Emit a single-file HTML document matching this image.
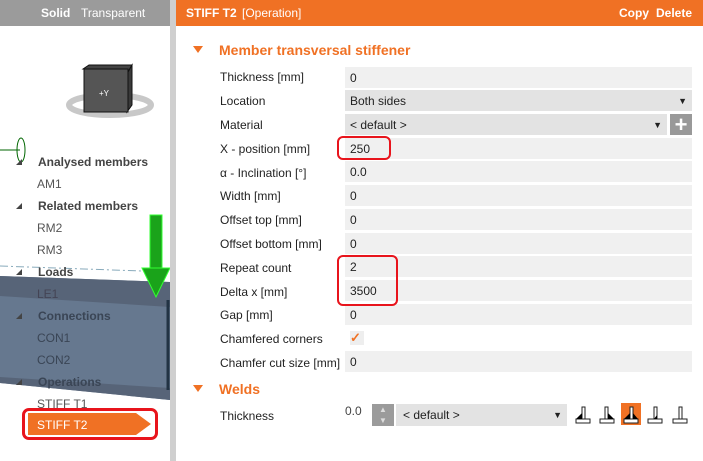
<!DOCTYPE html>
<html><head><meta charset="utf-8"><style>
*{margin:0;padding:0;box-sizing:border-box}
body{width:703px;height:461px;overflow:hidden;background:#fff;font-family:"Liberation Sans",sans-serif;font-size:12px;color:#222;position:relative}
.a{position:absolute}
.lbl{position:absolute;left:220px;font-size:12px;color:#222}
.fld{position:absolute;left:345px;width:347px;height:21px;background:#f0f0f0;padding-left:5px;line-height:22px;font-size:12px}
.dd{background:#e3e3e3}
.arr{position:absolute;right:5px;top:0;font-size:9px}
.tree{position:absolute;font-size:12px;color:#555}
.tb{font-weight:bold;color:#444}
.tri{position:absolute;left:16px;width:0;height:0;border-left:6px solid transparent;border-bottom:6px solid #444}
</style></head><body>
<!-- left panel -->
<div class="a" style="left:0;top:0;width:170px;height:26px;background:#9b9b9b"></div>
<div class="a" style="left:41px;top:6px;color:#fff;font-weight:bold">Solid</div>
<div class="a" style="left:81px;top:6px;color:#fff">Transparent</div>
<div class="a" style="left:170px;top:0;width:6px;height:461px;background:#cfcfcf"></div>
<svg class="a" style="left:0;top:0" width="170" height="461">
<ellipse cx="110" cy="105" rx="41" ry="10" fill="none" stroke="#c8c8c8" stroke-width="6"/>
<polygon points="83,69 89,65 132,65 128,72" fill="#444" stroke="#111"/>
<polygon points="128,72 132,65 132,105 127,112" fill="#3a3a3a" stroke="#111"/>
<rect x="84" y="69" width="44" height="43" fill="#555" stroke="#111"/>
<text x="99" y="96" font-size="8" fill="#fff" font-family="Liberation Sans">+Y</text>
<line x1="0" y1="150" x2="20" y2="150" stroke="#060"/>
<ellipse cx="21" cy="150" rx="4" ry="12" fill="none" stroke="#060"/>
<polygon points="0,276 170,282 170,400 0,383" fill="#66788f"/>
<polygon points="0,276 170,282 170,307 0,296" fill="#576478"/>
<polygon points="0,377 170,388 170,400 0,383" fill="#576478"/>
<line x1="0" y1="266" x2="170" y2="272" stroke="#8ab" stroke-dasharray="8 3 2 3"/>
<rect x="150" y="215" width="12" height="55" fill="#1aa31a" stroke="#3f3"/>
<polygon points="142,268 170,268 156,297" fill="#1aa31a" stroke="#3f3"/>
<line x1="168" y1="300" x2="168" y2="390" stroke="#234" stroke-width="3"/>
</svg>
<div class="tri" style="top:159px"></div>
<div class="tree tb" style="left:38px;top:155px">Analysed members</div>
<div class="tree" style="left:37px;top:177px">AM1</div>
<div class="tri" style="top:203px"></div>
<div class="tree tb" style="left:38px;top:199px">Related members</div>
<div class="tree" style="left:37px;top:221px">RM2</div>
<div class="tree" style="left:37px;top:243px">RM3</div>
<div class="tri" style="top:269px"></div>
<div class="tree tb" style="left:38px;top:265px">Loads</div>
<div class="tree" style="left:37px;top:287px;color:#445">LE1</div>
<div class="tri" style="top:313px"></div>
<div class="tree tb" style="left:38px;top:309px;color:#3a4555">Connections</div>
<div class="tree" style="left:37px;top:331px;color:#3a4555">CON1</div>
<div class="tree" style="left:37px;top:353px;color:#3a4555">CON2</div>
<div class="tri" style="top:379px"></div>
<div class="tree tb" style="left:38px;top:375px;color:#3a4555">Operations</div>
<div class="tree" style="left:37px;top:397px">STIFF T1</div>
<svg class="a" style="left:28px;top:413px" width="124" height="22"><polygon points="0,0 108,0 123,11 108,22 0,22" fill="#f07124"/></svg>
<div class="a" style="left:37px;top:418px;color:#fff">STIFF T2</div>
<div class="a" style="left:22px;top:408px;width:136px;height:32px;border:3px solid #e8141c;border-radius:7px"></div>
<!-- right header -->
<div class="a" style="left:176px;top:0;width:527px;height:26px;background:#f07124"></div>
<div class="a" style="left:186px;top:6px;color:#fff;font-weight:bold">STIFF T2</div>
<div class="a" style="left:242px;top:6px;color:#fff">[Operation]</div>
<div class="a" style="left:619px;top:6px;color:#fff;font-weight:bold">Copy</div>
<div class="a" style="left:656px;top:6px;color:#fff;font-weight:bold">Delete</div>
<div class="a" style="left:193px;top:46px;width:0;height:0;border-left:5px solid transparent;border-right:5px solid transparent;border-top:7px solid #f07124"></div>
<div class="a" style="left:219px;top:42px;color:#f07124;font-weight:bold;font-size:14px">Member transversal stiffener</div>

<div class="lbl" style="top:70px">Thickness [mm]</div><div class="fld" style="top:67px">0</div>
<div class="lbl" style="top:94px">Location</div><div class="fld dd" style="top:90px">Both sides<span class="arr">▼</span></div>
<div class="lbl" style="top:118px">Material</div><div class="fld dd" style="top:114px;width:322px">&lt; default &gt;<span class="arr">▼</span></div>
<div class="a" style="left:670px;top:114px;width:22px;height:21px;background:#999;color:#fff;font-size:22px;font-weight:bold;text-align:center;line-height:21px">+</div>
<div class="lbl" style="top:142px">X - position [mm]</div><div class="fld" style="top:138px">250</div>
<div class="lbl" style="top:166px">α - Inclination [°]</div><div class="fld" style="top:161px">0.0</div>
<div class="lbl" style="top:189px">Width [mm]</div><div class="fld" style="top:185px">0</div>
<div class="lbl" style="top:213px">Offset top [mm]</div><div class="fld" style="top:209px">0</div>
<div class="lbl" style="top:237px">Offset bottom [mm]</div><div class="fld" style="top:233px">0</div>
<div class="lbl" style="top:261px">Repeat count</div><div class="fld" style="top:256px">2</div>
<div class="lbl" style="top:285px">Delta x [mm]</div><div class="fld" style="top:280px">3500</div>
<div class="lbl" style="top:308px">Gap [mm]</div><div class="fld" style="top:304px">0</div>
<div class="lbl" style="top:332px">Chamfered corners</div>
<div class="a" style="left:350px;top:331px;width:14px;height:14px;background:#eee;color:#f07124;font-size:13px;line-height:14px;font-weight:bold">✓</div>
<div class="lbl" style="top:356px">Chamfer cut size [mm]</div><div class="fld" style="top:351px">0</div>
<div class="a" style="left:337px;top:136px;width:54px;height:24px;border:2px solid #e8141c;border-radius:6px"></div>
<div class="a" style="left:337px;top:255px;width:61px;height:51px;border:2px solid #e8141c;border-radius:6px"></div>

<div class="a" style="left:193px;top:385px;width:0;height:0;border-left:5px solid transparent;border-right:5px solid transparent;border-top:7px solid #f07124"></div>
<div class="a" style="left:219px;top:381px;color:#f07124;font-weight:bold;font-size:14px">Welds</div>
<div class="lbl" style="top:409px">Thickness</div>
<div class="a" style="left:345px;top:404px;color:#444">0.0</div>
<div class="a" style="left:372px;top:404px;width:22px;height:22px;background:#9b9b9b;color:#ddd;font-size:8px;text-align:center;line-height:11px">▲<br>▼</div>
<div class="a" style="left:396px;top:404px;width:171px;height:22px;background:#e3e3e3;padding-left:7px;line-height:22px">&lt; default &gt;<span style="position:absolute;right:5px;font-size:9px">▼</span></div>
<svg class="a" style="left:570px;top:403px" width="130" height="24">
<rect x="51" y="0" width="20" height="22" fill="#f07124"/>
<g fill="#fff" stroke="#222" stroke-width="1">
<rect x="6" y="16" width="14" height="4"/><rect x="12" y="4" width="3" height="12"/>
<rect x="30" y="16" width="14" height="4"/><rect x="35" y="4" width="3" height="12"/>
<rect x="54" y="16" width="14" height="4"/><rect x="60" y="4" width="3" height="12"/>
<rect x="78" y="16" width="14" height="4"/><rect x="84" y="4" width="3" height="12"/>
<rect x="103" y="16" width="14" height="4"/><rect x="109" y="4" width="3" height="12"/>
</g>
<g fill="#000">
<polygon points="6,16 12,10 12,16"/><polygon points="38,10 44,16 38,16"/>
<polygon points="54,16 60,10 60,16"/><polygon points="63,10 68,16 63,16"/>
<polygon points="87,12 87,16 84,16"/>
</g>
</svg>
</body></html>
